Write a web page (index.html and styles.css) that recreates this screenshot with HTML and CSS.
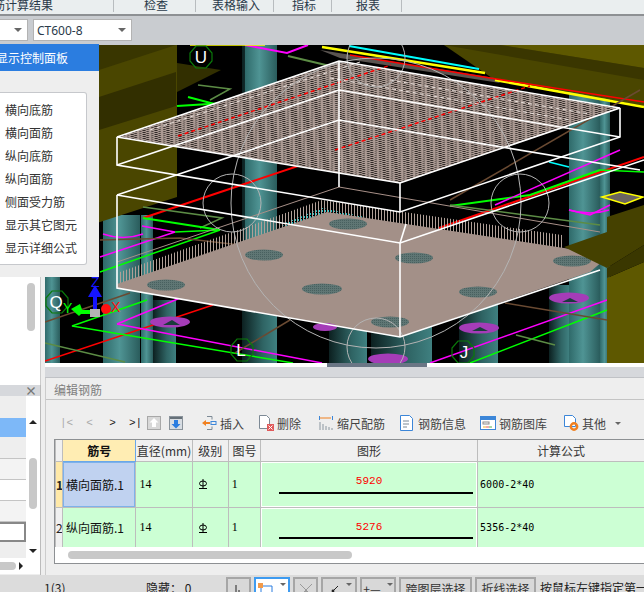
FILE: index.html
```html
<!DOCTYPE html>
<html lang="zh">
<head>
<meta charset="utf-8">
<title>编辑钢筋</title>
<link rel="stylesheet" href="styles.css">
</head>
<body>
<div class="app">
  <nav class="tabs">
    <span class="tab t1">筋计算结果</span>
    <span class="tab t2">检查</span>
    <span class="tab t3">表格输入</span>
    <span class="tab t4">指标</span>
    <span class="tab t5">报表</span>
  </nav>
  <div class="combos">
    <div class="combo c1"><i class="caret"></i></div>
    <div class="combo c2"><span>CT600-8</span><i class="caret"></i></div>
  </div>
  <div class="work">
    <aside class="side">
      <div class="side-top"><div class="thumb-v"></div></div>
      <div class="side-bottom">
        <div class="side-head"><span class="close">×</span></div>
        <div class="side-body">
          <div class="rows">
            <div class="srow r-head"></div>
            <div class="srow r-sel"></div>
            <div class="srow r-alt"></div>
            <div class="srow r-mid"></div>
            <div class="srow r-white"></div>
            <div class="srow r-mid"></div>
            <div class="srow r-input"></div>
            <div class="srow r-fill"></div>
          </div>
          <div class="vscroll"><i class="up"></i><b></b><i class="down"></i></div>
        </div>
        <div class="side-hscroll"><b></b><i></i></div>
      </div>
    </aside>
    <section class="main">
      <div class="view">
        <svg class="scene" viewBox="0 0 599 318" width="599" height="318" aria-hidden="true">
          <defs>
            <linearGradient id="teal" x1="0" x2="1" y1="0" y2="0">
              <stop offset="0" stop-color="#2f6a6a"/><stop offset=".45" stop-color="#4f9494"/><stop offset="1" stop-color="#2a5c5c"/>
            </linearGradient>
            <linearGradient id="tealdark" x1="0" x2="1" y1="0" y2="0">
              <stop offset="0" stop-color="#0c2020"/><stop offset=".6" stop-color="#2f6464"/><stop offset="1" stop-color="#3f8080"/>
            </linearGradient>
            <pattern id="mesh" width="4" height="4" patternUnits="userSpaceOnUse" patternTransform="matrix(1 -.34 1 .167 0 0)">
              <rect width="4" height="4" fill="#ab9a93"/>
              <rect x="1" y="1" width="2" height="2" fill="#1a1614"/>
            </pattern>
            <pattern id="fence" width="3" height="40" patternUnits="userSpaceOnUse">
              <rect width="1" height="40" fill="#b0a098"/>
            </pattern>
            <pattern id="dots" width="2" height="2" patternUnits="userSpaceOnUse">
              <rect width="2" height="2" fill="#5f7674"/>
              <rect width="1" height="1" fill="#48605f"/>
            </pattern>
            <pattern id="cyan" width="3" height="3" patternUnits="userSpaceOnUse">
              <rect width="2" height="2" fill="#1fc8c8"/>
            </pattern>
            <polygon id="oct" points="-5,-11 5,-11 11,-4 11,4 5,11 -5,11 -11,4 -11,-4"/>
          </defs>
          <g transform="translate(-45 -45)">
            <rect x="45" y="45" width="599" height="318" fill="#000"/>
            <!-- columns -->
            <rect x="45" y="270" width="15" height="93" fill="url(#teal)"/>
            <rect x="103" y="215" width="37" height="148" fill="url(#teal)"/>
            <rect x="141" y="215" width="12" height="148" fill="url(#teal)"/>
            <rect x="153" y="300" width="23" height="63" fill="url(#tealdark)"/>
            <rect x="242" y="45" width="35" height="318" fill="url(#tealdark)"/>
            <rect x="245" y="45" width="32" height="205" fill="url(#teal)"/>
            <rect x="329" y="325" width="38" height="38" fill="url(#tealdark)"/>
            <rect x="371" y="325" width="61" height="38" fill="url(#tealdark)"/>
            <rect x="459" y="300" width="39" height="63" fill="url(#tealdark)"/>
            <rect x="549" y="285" width="20" height="78" fill="url(#tealdark)"/>
            <rect x="569" y="92" width="31" height="271" fill="url(#teal)"/>
            <rect x="600" y="92" width="10" height="271" fill="url(#teal)"/>
            <!-- olive left -->
            <polygon points="45,45 177,45 177,197 100,222 45,240" fill="#4a4600"/>
            <polygon points="99,70 176,45 99,45" fill="#393600"/>
            <polygon points="99,97 176,72 176,106 99,130" fill="#322f00"/>
            <polygon points="177,63 221,70 177,92" fill="#322f00"/>
            <!-- olive right -->
            <polygon points="444,45 644,45 644,106 569,92 492,78" fill="#4a4600"/>
            <polygon points="500,45 644,45 644,68" fill="#5e5800"/>
            <polygon points="444,45 500,45 644,68 644,80" fill="#3a3600"/>
            <!-- lines back -->
            <g fill="none" stroke-width="1.5">
              <polyline points="245,45 287,53 308,45" stroke="#f0f" stroke-width="2"/>
              <polyline points="190,45 265,45" stroke="#ff0"/>
              <polygon points="320,50 495,78 500,83 340,58" fill="#5a5450" stroke="none"/>
              <polyline points="349,46 479,69" stroke="#0ff" stroke-width="2"/>
              <polyline points="322,47 485,73" stroke="#ff0" stroke-width="2.5"/>
              <polyline points="495,80 644,107" stroke="#ff0" stroke-width="2.5"/>
              <polyline points="350,55 490,78 644,102" stroke="#f00"/>
              <polyline points="188,97 222,106" stroke="#0f0" stroke-width="2"/>
              <polyline points="177,106 225,103" stroke="#0f0" stroke-width="2"/>
              <polyline points="198,85 230,89 210,100" stroke="#5c8c45"/>
              <polyline points="288,56 330,66" stroke="#5c8c45" stroke-width="2"/>
              <polyline points="143,218 322,158" stroke="#f00" stroke-width="2"/>
              <polyline points="439,228 644,157" stroke="#f00" stroke-width="2"/>
              <polyline points="143,207 222,218 200,228" stroke="#5c8c45" stroke-width="1.5"/>
              <polyline points="143,218 220,230" stroke="#0f0" stroke-width="2"/>
              <polyline points="142,226 175,232 100,257" stroke="#f0f" stroke-width="1.5"/>
              <polyline points="175,232 220,230 100,272" stroke="#0f0" stroke-width="1.5"/>
              <path d="M103 234q20 7 40 0" stroke="#f0f" stroke-width="1.5"/>
              <polyline points="100,240 180,238 240,245" stroke="#6a4a32"/>
              <polyline points="45,361 213,305" stroke="#f00" stroke-width="1.5"/>
              <polyline points="45,322 130,293" stroke="#6a4a32" stroke-width="1.5"/>
              <polyline points="45,343 125,362" stroke="#5c8c45" stroke-width="1.5"/>
              <polyline points="117,324 185,296" stroke="#f0f" stroke-width="1.5"/>
              <polyline points="117,324 322,363" stroke="#f0f" stroke-width="1.5"/>
              <polyline points="147,300 72,326 293,363" stroke="#0f0" stroke-width="1.5"/>
              <polyline points="235,353 290,320" stroke="#6a4a32" stroke-width="1.5"/>
              <polyline points="430,363 607,300" stroke="#f0f" stroke-width="1.5"/>
              <polyline points="470,363 607,310" stroke="#0f0" stroke-width="1.5"/>
              <polyline points="516,335 555,345" stroke="#5c8c45" stroke-width="1.5"/>
              <polyline points="505,303 607,320" stroke="#6a4a32" stroke-width="1.5"/>
              <polyline points="450,200 640,90" stroke="#6a4a32"/>
              <polyline points="450,206 530,195 600,170" stroke="#0f0" stroke-width="2"/>
              <polyline points="495,205 620,150" stroke="#f0f" stroke-width="1.5"/>
              <polyline points="450,205 600,225" stroke="#5c8c45" stroke-width="1.5"/>
              <polyline points="569,210 590,215 610,205" stroke="#f0f"/>
              <polyline points="600,170 644,172" stroke="#0f0"/>
              <polyline points="549,162 569,167" stroke="#0ff"/>
            </g>
            <path d="M569 210q22 6 40 0" fill="none" stroke="#f0f" stroke-width="1.5"/>
            <polygon points="602,197 620,192 643,197 625,204" fill="#6b6560" stroke="#ff0" stroke-width="1.5"/>
            <!-- cyan rebars -->
            <polygon points="280,225 322,208 365,217 340,222 300,228" fill="url(#cyan)"/>
            <!-- fence -->
            <polygon points="120,272 322,200 562,235 562,252 322,216 120,284" fill="url(#fence)"/>
            <polyline points="117,262 339,187 600,232" fill="none" stroke="#a89088"/>
            <!-- plate -->
            <polygon points="117,284 327,212 610,255 590,272 400,337 117,288" fill="#a39088"/>
            <g fill="url(#dots)">
              <ellipse cx="166" cy="285" rx="19" ry="5.5"/>
              <ellipse cx="264" cy="255" rx="19" ry="5.5"/>
              <ellipse cx="348" cy="224" rx="19" ry="5.5"/>
              <ellipse cx="322" cy="289" rx="20" ry="5.5"/>
              <ellipse cx="414" cy="258" rx="19" ry="5.5"/>
              <ellipse cx="478" cy="292" rx="19" ry="5.5"/>
              <ellipse cx="390" cy="322" rx="19" ry="5.5"/>
              <ellipse cx="572" cy="261" rx="19" ry="5.5"/>
            </g>
            <!-- purple holes -->
            <g fill="#a53cb8">
              <ellipse cx="170" cy="322" rx="20" ry="5.5"/>
              <ellipse cx="388" cy="359" rx="20" ry="5.5"/>
              <ellipse cx="479" cy="328" rx="20" ry="5.5"/>
              <ellipse cx="569" cy="298" rx="20" ry="5.5"/>
              <ellipse cx="325" cy="327" rx="12" ry="4"/>
            </g>
            <g fill="#1a3c3c">
              <polygon points="163,325 172,320 180,325"/>
              <polygon points="472,331 480,327 488,331"/>
              <polygon points="562,302 570,298 578,302"/>
            </g>
            <!-- top mesh -->
            <polygon points="117,137 339,61 620,108 400,183" fill="url(#mesh)"/>
            <g fill="none" stroke-dasharray="4 3">
              <line x1="178" y1="136" x2="391" y2="65" stroke="#f00" stroke-width="1.5"/>
              <line x1="335" y1="150" x2="530" y2="86" stroke="#f00" stroke-width="1.5"/>
              <line x1="150" y1="130" x2="360" y2="62" stroke="#e8e0dc"/>
              <line x1="330" y1="78" x2="570" y2="120" stroke="#e8e0dc"/>
              <line x1="390" y1="80" x2="590" y2="114" stroke="#e8e0dc"/>
            </g>
            <!-- grey guide circles -->
            <g fill="none" stroke="#b4b4b4" stroke-width="1">
              <circle cx="232" cy="203" r="29"/>
              <circle cx="520" cy="203" r="29"/>
              <circle cx="376" cy="347" r="29"/>
              <circle cx="376" cy="58" r="29"/>
              <circle cx="376" cy="203" r="145"/>
            </g>
            <!-- wire box -->
            <g fill="none" stroke="#fff" stroke-width="1.6">
              <polygon points="117,137 339,61 620,108 400,183"/>
              <polyline points="117,137 117,165 400,212 620,137 620,108"/>
              <line x1="400" y1="183" x2="400" y2="212"/>
              <line x1="339" y1="61" x2="339" y2="187"/>
              <polyline points="117,165 339,90 620,137"/>
              <polyline points="117,195 400,243 644,160"/>
              <polyline points="117,195 339,120 640,170"/>
              <polyline points="117,195 117,288 400,337 600,270"/>
              <line x1="400" y1="243" x2="400" y2="337"/>
              <line x1="400" y1="243" x2="406" y2="224"/>
            </g>
            <!-- olive right foreground -->
            <polygon points="607,278 644,262 644,363 607,363" fill="#5e5800"/>
            <polygon points="564,247 607,232 607,217 644,205 644,245 607,268" fill="#454100"/>
            <polygon points="607,268 644,245 644,262 607,278" fill="#3a3700"/>
            <!-- axis markers -->
            <g fill="none" stroke="#0a7a0a" stroke-width="1.2">
              <use href="#oct" x="201" y="57"/>
              <use href="#oct" x="57" y="302"/>
              <use href="#oct" x="242" y="350"/>
              <use href="#oct" x="463" y="352"/>
            </g>
            <g class="axis" fill="#fff">
              <text x="201" y="63" text-anchor="middle">U</text>
              <text x="56" y="308" text-anchor="middle">Q</text>
              <text x="241" y="356" text-anchor="middle">L</text>
              <text x="464" y="358" text-anchor="middle">J</text>
            </g>
            <!-- gizmo -->
            <rect x="93" y="290" width="4" height="20" fill="#1515ff"/>
            <polygon points="95,285 88,297 102,297" fill="#1515ff"/>
            <rect x="90" y="309" width="10" height="8" fill="#b4b4b4"/>
            <rect x="80" y="310" width="10" height="4" fill="#00ff00"/>
            <polygon points="71,309 80,304 83,312 79,316" fill="#00ff00"/>
            <circle cx="106" cy="309" r="5" fill="#ff1010"/>
            <g class="gizmo">
              <text x="91" y="287" fill="#1515ff">Z</text>
              <text x="111" y="312" fill="#ff1010">X</text>
              <text x="63" y="313" fill="#00ff00">Y</text>
            </g>
          </g>
        </svg>
      </div>
      <div class="splitter"><div class="handle"></div></div>
      <div class="editor">
        <h2 class="ed-title">编辑钢筋</h2>
        <div class="ed-toolbar">
          <span class="nav dim">|&lt;</span>
          <span class="nav dim">&lt;</span>
          <span class="nav">&gt;</span>
          <span class="nav">&gt;|</span>
          <svg class="ico" viewBox="0 0 14 14" width="14" height="14"><rect x=".5" y=".5" width="13" height="13" fill="#d8d8d8" stroke="#a8a8a8"/><path d="M7 2l4.500 4.500H9V11H5V6.500H2.500z" fill="#fff"/></svg>
          <svg class="ico" viewBox="0 0 14 14" width="14" height="14"><rect x=".5" y=".5" width="13" height="13" fill="#d8dde2" stroke="#8a939b"/><rect x="1" y="1" width="12" height="2" fill="#667078"/><path d="M7 12.500L11.500 8H9V4H5v4H2.500z" fill="#2b7de0"/></svg>
          <span class="tool first"><svg viewBox="0 0 16 16" width="16" height="16"><path d="M6 1.500h5M6 14.500h5M11 1.500v3M11 14.500v-3" stroke="#7d8a96" fill="none"/><path d="M1 8l4-3v2h4v2H5v2z" fill="#f08020"/><rect x="10" y="6.500" width="5" height="3" fill="none" stroke="#3c86d8"/></svg>插入</span>
          <span class="tool wide"><svg viewBox="0 0 16 16" width="16" height="16"><path d="M1.500 .5h7l3 3v10h-10z" fill="#fff" stroke="#7d8a96"/><rect x="9" y="9" width="7" height="7" fill="#e05a5a"/><path d="M10.500 10.500l4 4m0-4l-4 4" stroke="#fff"/></svg>删除</span>
          <span class="tool"><svg viewBox="0 0 16 16" width="16" height="16"><path d="M1.500 1v4M14.500 1v4" stroke="#3c86d8" fill="none"/><path d="M2 3h11" stroke="#f08020"/><path d="M2 15V7M5 15V9M8 15v-4M11 15v-3M14 15v-2" stroke="#8a96a0"/></svg>缩尺配筋</span>
          <span class="tool"><svg viewBox="0 0 16 16" width="16" height="16"><path d="M1.500 .5h9l3 3v12h-12z" fill="#fff" stroke="#3c86d8"/><path d="M4 6h6M4 9h6M4 12h4" stroke="#7d8a96"/></svg>钢筋信息</span>
          <span class="tool tail"><svg viewBox="0 0 16 16" width="16" height="16"><rect x=".5" y="1.500" width="15" height="13" fill="#fff" stroke="#3c86d8"/><rect x="1" y="2" width="14" height="3" fill="#3c86d8"/><rect x="3" y="7" width="6" height="2" fill="none" stroke="#8a8a8a"/><path d="M3 12h3" stroke="#e8b030"/><path d="M6 12h3" stroke="#e05a5a"/><path d="M9 12h3" stroke="#50b050"/></svg>钢筋图库</span>
          <span class="tool"><svg viewBox="0 0 16 16" width="16" height="16"><path d="M1.500 .5h8l3 3v8h-11z" fill="#fff" stroke="#3c86d8"/><circle cx="11" cy="11.500" r="3.200" fill="none" stroke="#f08020" stroke-width="2.400"/></svg>其他<i class="caret sm"></i></span>
        </div>
        <div class="grid">
          <div class="grid-clip">
            <table>
              <colgroup><col class="w0"><col class="w1"><col class="w2"><col class="w3"><col class="w4"><col class="w5"><col class="w6"></colgroup>
              <thead>
                <tr><th class="corner"></th><th class="key">筋号</th><th>直径(mm)</th><th>级别</th><th>图号</th><th>图形</th><th>计算公式</th></tr>
              </thead>
              <tbody>
                <tr class="row-a">
                  <th class="rh active">1</th><td class="name sel">横向面筋.1</td><td class="num">14</td><td class="num"><svg class="grade" viewBox="0 0 10 10" width="10" height="10"><ellipse cx="5" cy="4.500" rx="3.500" ry="2.500" fill="none" stroke="#000"/><path d="M5 0v9.500M1 9.500h8" stroke="#000"/></svg></td><td class="num">1</td>
                  <td class="shape"><div class="dim-num">5920</div><div class="bar"></div></td>
                  <td class="formula">6000-2*40</td>
                </tr>
                <tr class="row-b">
                  <th class="rh">2</th><td class="name">纵向面筋.1</td><td class="num">14</td><td class="num"><svg class="grade" viewBox="0 0 10 10" width="10" height="10"><ellipse cx="5" cy="4.500" rx="3.500" ry="2.500" fill="none" stroke="#000"/><path d="M5 0v9.500M1 9.500h8" stroke="#000"/></svg></td><td class="num">1</td>
                  <td class="shape"><div class="dim-num">5276</div><div class="bar"></div></td>
                  <td class="formula">5356-2*40</td>
                </tr>
              </tbody>
            </table>
          </div>
          <div class="grid-hscroll"><b></b></div>
        </div>
      </div>
    </section>
  </div>
  <footer class="status">
    <span class="st count">1(3)</span>
    <span class="st hidden">隐藏： 0</span>
    <span class="sbtn b1"><svg viewBox="0 0 12 12" width="12" height="12"><path d="M3 2v9h7M6 7v4" fill="none" stroke="#222"/></svg></span>
    <span class="sbtn b2"><svg viewBox="0 0 16 14" width="16" height="14"><path d="M3 3h11v11" fill="none" stroke="#2b7de0"/><path d="M3 3v11" stroke="#2b7de0"/><rect x="0" y="0" width="5" height="5" fill="#f29a4a"/></svg><i class="caret sm"></i></span>
    <span class="sbtn b3"><svg viewBox="0 0 14 14" width="14" height="14"><path d="M1 1l12 12M13 1L1 13" stroke="#9a9a9a"/><circle cx="7" cy="9" r="1.500" fill="#9a9a9a"/></svg></span>
    <span class="sbtn b4"><svg viewBox="0 0 14 14" width="14" height="14"><path d="M2 13L12 3" stroke="#222"/><circle cx="7" cy="8" r="1.400" fill="#222"/></svg><i class="caret sm"></i></span>
    <span class="sbtn b5"><span class="plus">+—</span><i class="caret sm"></i></span>
    <span class="sbtn txt">跨图层选择</span>
    <span class="sbtn txt">折线选择</span>
    <span class="st hint">按鼠标左键指定第一个角点</span>
  </footer>

  <div class="panel">
    <div class="panel-head">显示控制面板</div>
    <ul class="panel-list">
      <li>横向底筋</li><li>横向面筋</li><li>纵向底筋</li><li>纵向面筋</li><li>侧面受力筋</li><li>显示其它图元</li><li>显示详细公式</li>
    </ul>
  </div>
</div>
</body>
</html>
```
FILE: styles.css
```css
* { box-sizing: border-box; }
html, body { margin: 0; padding: 0; }
body { width: 644px; height: 592px; overflow: hidden; font-family: "Noto Sans CJK SC", "Noto Sans", sans-serif; font-size: 12px; color: #222; }
.app { position: relative; width: 644px; height: 592px; overflow: hidden; display: flex; flex-direction: column; background: #eee; }

.tabs { height: 16px; flex: none; display: flex; background: #eaeeef; border-bottom: 2px solid #8d9093; overflow: hidden; align-items: flex-start; }
.tab { height: 12px; line-height: 10px; border-right: 1px solid #b8bcbf; padding-left: 3px; text-align: center; white-space: nowrap; color: #2a3a4a; font-size: 12px; flex: none; overflow: visible; }
.t1 { width: 114px; padding-left: 0; text-align: left; text-indent: -7px; }
.t2 { width: 82px; }
.t3 { width: 78px; }
.t4 { width: 58px; }
.t5 { width: 70px; }

.combos { height: 29px; flex: none; background: #c9ccd0; display: flex; gap: 5px; padding: 3px 0 0; }
.combo { height: 22px; background: #fff; border: 1px solid #b3b3b3; display: flex; align-items: center; justify-content: space-between; padding: 0 2px 0 3px; font-family: "Noto Sans", sans-serif; font-size: 12px; color: #2a3a4a; }
.c1 { width: 28px; border-left: 0; justify-content: flex-end; }
.c2 { width: 99px; }
.caret { width: 0; height: 0; border: 4px solid transparent; border-top: 4px solid #666; border-bottom: 0; margin-right: 3px; display: inline-block; }
.caret.sm { border-width: 3px 3px 0; margin: 0 0 0 6px; }

.work { flex: 1; display: flex; min-height: 0; }
.side { width: 45px; flex: none; display: flex; flex-direction: column; border-right: 4px solid #eee; }
.side-top { height: 340px; flex: none; background: #fff; padding: 238px 0 0 27px; border-right: 1px solid #ccc; }
.thumb-v { width: 8px; height: 48px; background: #c8c8c8; border-radius: 4px; }
.side-bottom { flex: 1; background: #eee; display: flex; flex-direction: column; border-right: 1px solid #bbb; padding-bottom: 1px; }
.side-head { height: 11px; flex: none; background: #d6d8dc; text-align: right; padding-right: 3px; line-height: 11px; font-size: 12px; font-weight: 700; color: #777; overflow: hidden; }
.side-body { flex: none; height: 162px; display: flex; background: #fff; }
.rows { width: 26px; flex: none; display: flex; flex-direction: column; }
.srow { flex: none; }
.r-head { height: 22px; background: #eee; }
.r-sel { height: 19px; background: #7db8f8; }
.r-alt { height: 22px; background: #eee; border-bottom: 1px solid #c4c4c4; }
.r-mid { height: 21px; background: #f3f3f3; border-bottom: 1px solid #c4c4c4; }
.r-white { height: 21px; background: #fff; border-bottom: 1px solid #c4c4c4; }
.r-input { height: 20px; background: #fff; border: 2px solid #888; border-left: 0; }
.r-fill { flex: 1; background: #eee; }
.vscroll { flex: 1; display: flex; flex-direction: column; align-items: center; padding: 24px 0 5px; }
.vscroll b { width: 8px; height: 51px; margin: 34px 0 auto; background: #c8c8c8; border-radius: 4px; }
.up, .down { width: 0; height: 0; border: 4px solid transparent; flex: none; }
.up { border-bottom: 4px solid #222; border-top: 0; }
.down { border-top: 4px solid #222; border-bottom: 0; }
.side-hscroll { height: 16px; flex: none; display: flex; align-items: center; background: #fff; }
.side-hscroll b { width: 16px; height: 8px; background: #c8c8c8; border-radius: 0 4px 4px 0; }
.side-hscroll i { margin-left: 3px; border: 4px solid transparent; border-left: 4px solid #222; border-right: 0; }

.main { flex: 1; min-width: 0; display: flex; flex-direction: column; }
.view { height: 318px; flex: none; background: #000; overflow: hidden; }
.scene { display: block; }
.axis text { font-family: "Liberation Sans", sans-serif; font-size: 17px; }
.gizmo text { font-family: "Liberation Sans", sans-serif; font-size: 14px; }
.splitter { height: 15px; flex: none; position: relative; background: linear-gradient(#fff 0 4px, #d6d8dc 4px); border-bottom: 1px solid #c0c2c6; }
.handle { position: absolute; left: 282px; top: 0; width: 100px; height: 4px; background: #6a7685; }

.editor { flex: 1; min-height: 0; display: flex; flex-direction: column; background: #eee; border-left: 1px solid #ccc; padding-bottom: 11px; }
.ed-title { height: 22px; margin: 0; flex: none; font-size: 12px; font-weight: 400; color: #808080; line-height: 24px; padding-left: 8px; border-bottom: 1px solid #c4c4c4; }
.ed-toolbar { height: 39px; flex: none; display: flex; align-items: center; margin-left: 9px; padding-top: 7px; color: #444; }
.nav { width: 23px; text-align: center; font-family: "Liberation Mono", monospace; font-size: 11px; color: #222; flex: none; }
.nav.dim { color: #aaa; }
.ico { margin: 0 8px 0 0; flex: none; }
.tool { display: inline-flex; align-items: center; gap: 3px; margin-right: 14px; white-space: nowrap; flex: none; color: #444; }
.first { margin-left: 10px; }
.wide { margin-right: 17px; }
.tail { margin-right: 16px; }

.grid { flex: 1; min-height: 0; margin-left: 8px; background: #fff; border: 1px solid #8d9093; border-right: 0; display: flex; flex-direction: column; }
.grid-clip { height: 107px; flex: none; overflow: hidden; }
table { border-collapse: collapse; table-layout: fixed; width: 590px; }
.w0 { width: 7px; } .w1 { width: 73px; } .w2 { width: 56px; } .w3 { width: 36px; } .w4 { width: 32px; } .w5 { width: 216px; } .w6 { width: 166px; }
th, td { padding: 0; font-weight: 400; border: 1px solid #bdbdbd; vertical-align: middle; }
thead th { height: 21px; background: #f0f0f0; color: #333; text-align: center; border-top: 0; white-space: nowrap; overflow: hidden; }
thead .key { background: #ffedb3; color: #111; font-weight: 700; border-bottom: 1px solid #6aa7e8; border-right: 1px solid #6aa7e8; }
tbody tr { background: #ccffd4; }
.row-a { height: 46px; }
.row-b { height: 41px; }
.rh { background: #f0f0f0; font-size: 12px; text-align: center; overflow: hidden; }
.rh.active { background: #ffe9a8; font-weight: 700; }
.name { padding-left: 3px; color: #111; white-space: nowrap; overflow: hidden; }
.name.sel { background: #c0d2f0; box-shadow: inset 0 0 0 1px #7eb2ea; }
.num { font-family: "Liberation Serif", serif; font-size: 12px; padding-left: 3px; color: #000; }
.grade { display: block; margin-left: 2px; }
.formula { font-family: "DejaVu Sans Mono", monospace; font-size: 10px; padding-left: 2px; color: #000; }
.shape { text-align: center; box-shadow: inset 0 0 0 1px #fff; }
.dim-num { font-family: "Liberation Mono", monospace; font-size: 11px; color: #f00; line-height: 14px; }
.bar { height: 2px; background: #000; margin: 4px 4px 0 18px; }
.row-b .dim-num { margin-top: 3px; }
.row-b .bar { margin-top: 3px; }
.grid-hscroll { flex: 1; display: flex; align-items: center; padding-left: 13px; background: #fff; }
.grid-hscroll b { width: 284px; height: 8px; border-radius: 4px; background: #c8c8c8; }

.status { height: 17px; flex: none; display: flex; background: #dcdcdc; overflow: hidden; align-items: flex-start; padding-top: 2px; }
.st { white-space: nowrap; flex: none; line-height: 22px; }
.count { margin-left: 44px; width: 102px; }
.hidden { width: 80px; }
.sbtn { height: 22px; background: #d8d8d8; border: 2px solid #a6a6a6; flex: none; display: inline-flex; align-items: flex-start; justify-content: center; padding-top: 4px; margin-right: 3px; color: #333; white-space: nowrap; }
.b1 { width: 25px; }
.b2 { width: 36px; background: #fff; border-color: #3e9bf0; }
.b3 { width: 25px; }
.b4 { width: 36px; }
.b5 { width: 36px; }
.plus { font-size: 12px; line-height: 12px; }
.txt { padding: 1px 6px 0; line-height: 18px; width: 73px; }
.txt + .txt { width: 61px; }
.hint { margin-left: 1px; }

.panel { position: absolute; left: 0; top: 44px; width: 99px; height: 233px; background: #eee; }
.panel-head { height: 27px; background: #2b7de0; color: #fff; line-height: 27px; white-space: nowrap; overflow: hidden; text-indent: -4px; font-size: 12px; }
.panel-list { list-style: none; margin: 21px 0 0; padding: 5px 0 0 5px; width: 87px; height: 173px; background: #fff; border: 1px solid #c6c8cc; border-left: 0; border-radius: 0 3px 3px 0; }
.panel-list li { height: 23px; line-height: 23px; white-space: nowrap; color: #333; }
```
